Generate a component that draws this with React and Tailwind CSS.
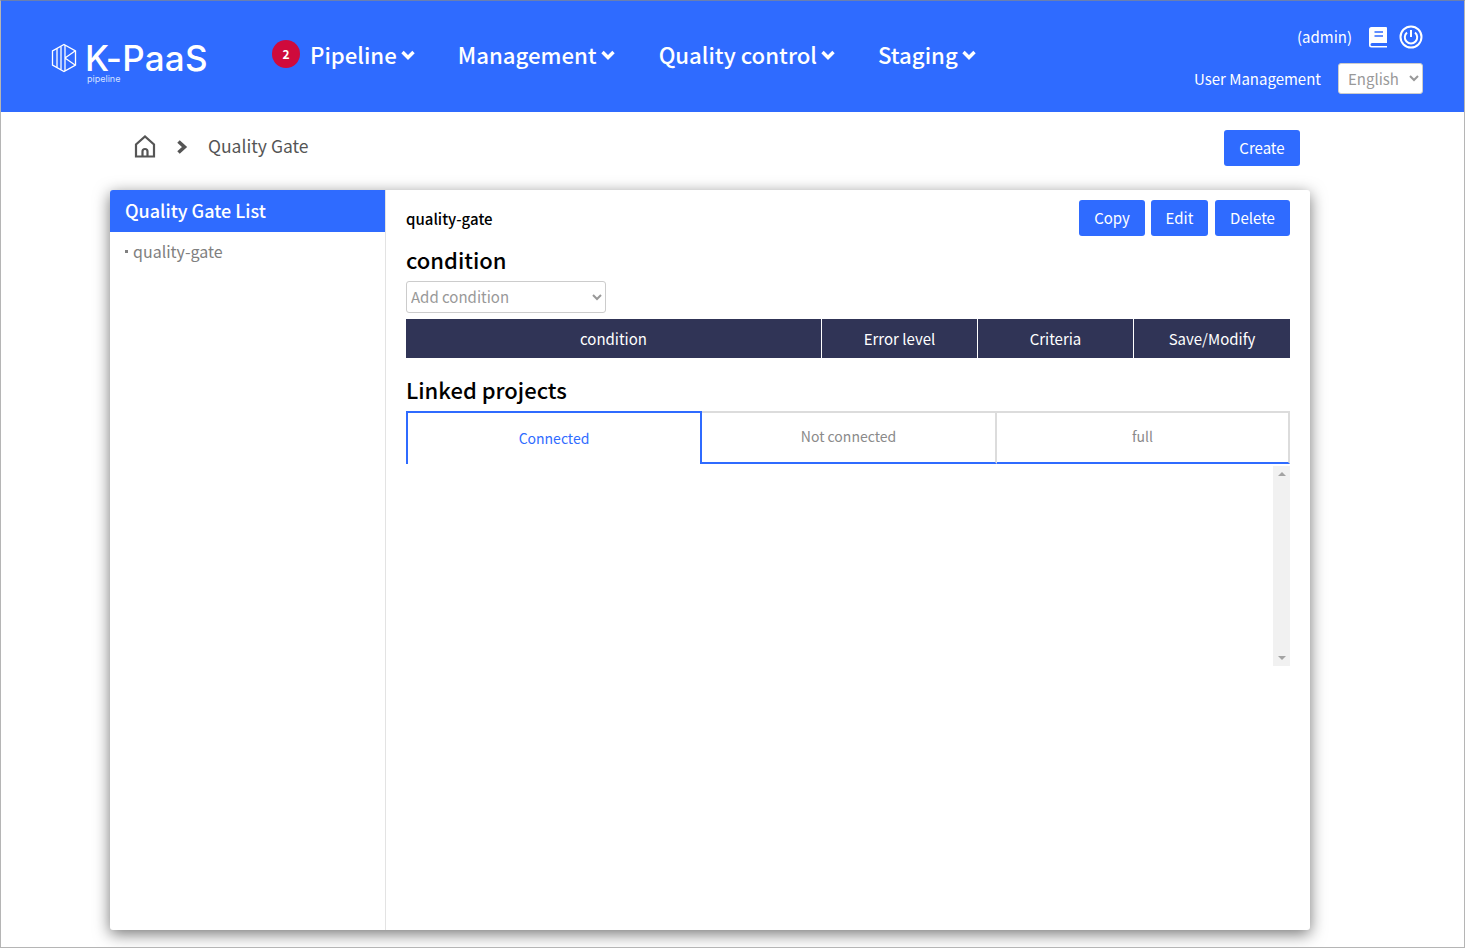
import React from "react";

const FONT = "font-['Noto_Sans_CJK_KR','Noto_Sans',sans-serif]";

function Logo() {
  return (
    <svg width="26" height="30" viewBox="0 0 26 30" fill="none" stroke="white" strokeWidth="1.3">
      <path d="M13 1.5 L24.5 8 V22 L13 28.5 L1.5 22 V8 Z" />
      <path d="M6 5.5 V24.5 M10 3.5 V26.5 M14 2 V28 M14 15 L24 8 M14 15 L24 22" />
    </svg>
  );
}

function Chevron() {
  return (
    <svg width="14" height="10" viewBox="0 0 14 10" fill="none" stroke="white" strokeWidth="3.4" className="ml-[4px] mt-[1px]">
      <path d="M1.5 2 L7 7.5 L12.5 2" />
    </svg>
  );
}

function NavItem({ label, className }) {
  return (
    <div className={`flex items-center text-[22.2px] font-medium leading-[32px] text-white ${className}`}>
      <span>{label}</span>
      <Chevron />
    </div>
  );
}

function Btn({ children, className = "" }) {
  return (
    <button className={`h-[36px] rounded-[3px] bg-[#2f6bff] text-white text-[15px] leading-[36px] ${className}`}>
      {children}
    </button>
  );
}

export default function App() {
  return (
    <div className={`${FONT} h-[948px] w-[1465px] border border-[#b5b5b5] border-t-[#6a7fb0] bg-white overflow-hidden flex flex-col`}>
      <header className="h-[111px] shrink-0 bg-[#2f6bff] flex items-start">
        <div className="ml-[50px] mt-[42px] flex items-center w-[221px] shrink-0">
          <Logo />
          <div className="ml-[8px] relative">
            <div className="font-['Inter'] text-[35px] leading-[28px] font-medium text-white tracking-[0.2px]">K-PaaS</div>
            <div className="absolute left-[2px] top-[30px] font-['Inter'] text-[9px] leading-[10px] text-[#d5e2ff]">pipeline</div>
          </div>
        </div>
        <div className="flex items-center mt-[37px]">
          <div className="w-[28px] h-[28px] rounded-full bg-[#cf0a3c] flex items-center justify-center text-white text-[12px] font-bold mr-[10px] -mt-[1px]">2</div>
          <NavItem label="Pipeline" className="mr-[43px]" />
          <NavItem label="Management" className="mr-[44px]" />
          <NavItem label="Quality control" className="mr-[43px]" />
          <NavItem label="Staging" />
        </div>
        <div className="ml-auto mr-[41px] mt-[21px] flex flex-col items-end">
          <div className="flex items-center h-[30px]">
            <span className="text-white text-[15px] leading-[30px]">(admin)</span>
            <svg className="ml-[16px]" width="20" height="22" viewBox="0 0 20 22">
              <path d="M3.5 1 H18 a1 1 0 0 1 1 1 V17 H4 a1.5 1.5 0 0 0 0 3 H19 V21.5 H3.5 A2.5 2.5 0 0 1 1 19 V3.5 A2.5 2.5 0 0 1 3.5 1 Z" fill="white" />
              <path d="M6.5 6 H15 M6.5 10 H15" stroke="#2f6bff" strokeWidth="1.6" />
            </svg>
            <svg className="ml-[11px]" width="24" height="24" viewBox="0 0 24 24" fill="none" stroke="white" strokeWidth="2">
              <circle cx="12" cy="12" r="10.5" />
              <path d="M8 7.5 A6.2 6.2 0 1 0 16 7.5 M12 5 V12" />
            </svg>
          </div>
          <div className="flex items-center mt-[11px]">
            <span className="text-white text-[15px] leading-[31px] mr-[17px]">User Management</span>
            <select className="w-[85px] h-[31px] rounded-[3px] bg-white border border-[#cccccc] text-[#999999] text-[15px] pl-[5px]">
              <option>English</option>
            </select>
          </div>
        </div>
      </header>

      <main className="w-[1200px] ml-[109px] flex flex-col">
        <div className="h-[78px] flex items-start shrink-0">
          <svg className="ml-[24px] mt-[23px]" width="22" height="23" viewBox="0 0 22 23" fill="none" stroke="#555555" strokeWidth="2.2">
            <path d="M2 21.5 V9.5 L11 1.5 L20 9.5 V21.5 Z" />
            <path d="M8.5 21.5 V16.5 A2.5 2.5 0 0 1 13.5 16.5 V21.5" />
          </svg>
          <svg className="ml-[20px] mt-[28px]" width="12" height="14" viewBox="0 0 12 14" fill="none" stroke="#555555" strokeWidth="3.6">
            <path d="M2.5 1.5 L8.5 7 L2.5 12.5" />
          </svg>
          <span className="ml-[20px] mt-[20px] text-[17.5px] leading-[28px] text-[#555555]">Quality Gate</span>
          <Btn className="ml-auto mr-[10px] mt-[18px] w-[76px]">Create</Btn>
        </div>

        <div className="h-[740px] rounded-[3px] bg-white shadow-[0_4px_16px_rgba(0,0,0,0.55)] flex">
          <aside className="w-[276px] shrink-0 border-r border-[#e3e3e3]">
            <div className="h-[42px] rounded-tl-[3px] bg-[#2f6bff] pl-[15px] text-white text-[18px] font-medium leading-[41px]">Quality Gate List</div>
            <div className="pl-[15px] mt-[7px] flex items-center text-[16px] leading-[24px] text-[#808080]">
              <span className="w-[3px] h-[3px] bg-[#808080] mr-[5px]"></span>
              quality-gate
            </div>
          </aside>
          <section className="flex-1 pl-[20px] pr-[20px] flex flex-col">
            <div className="flex items-center mt-[10px] h-[36px]">
              <span className="text-[15px] font-medium text-black leading-[36px] mt-[2px]">quality-gate</span>
              <div className="ml-auto flex gap-[7px]">
                <Btn className="w-[66px] -mr-[1px]">Copy</Btn>
                <Btn className="w-[57px]">Edit</Btn>
                <Btn className="w-[75px]">Delete</Btn>
              </div>
            </div>
            <h2 className="mt-[7px] text-[22px] font-medium leading-[32px] text-black">condition</h2>
            <select className="mt-[6px] w-[200px] h-[32px] rounded-[3px] border border-[#cccccc] bg-white text-[15px] text-[#999999] pb-[1px]">
              <option>Add condition</option>
            </select>
            <div className="mt-[6px] h-[39px] bg-[#303456] flex text-white text-[15px] leading-[39px] text-center">
              <div className="w-[416px] border-r border-white">condition</div>
              <div className="w-[156px] border-r border-white">Error level</div>
              <div className="w-[156px] border-r border-white">Criteria</div>
              <div className="flex-1">Save/Modify</div>
            </div>
            <h2 className="mt-[15px] text-[22px] font-medium leading-[32px] text-black">Linked projects</h2>
            <div className="mt-[6px] flex h-[53px] text-[14px] text-center">
              <div className="w-[296px] border-2 border-b-0 border-[#2f6bff] text-[#2f6bff] leading-[51px]">Connected</div>
              <div className="w-[295px] border-t-2 border-r-2 border-b-2 border-[#dcdcdc] border-b-[#2f6bff] text-[#8a8a8a] leading-[47px]">Not connected</div>
              <div className="flex-1 border-t-2 border-r-2 border-b-2 border-[#dcdcdc] border-b-[#2f6bff] text-[#8a8a8a] leading-[47px]">full</div>
            </div>
            <div className="mt-[2px] h-[200px] flex justify-end">
              <div className="w-[17px] bg-[#f1f1f1] flex flex-col items-center justify-between py-[6px]">
                <div className="w-0 h-0 border-x-[4px] border-x-transparent border-b-[4px] border-b-[#a3a3a3]"></div>
                <div className="w-0 h-0 border-x-[4px] border-x-transparent border-t-[4px] border-t-[#a3a3a3]"></div>
              </div>
            </div>
          </section>
        </div>
      </main>
    </div>
  );
}
